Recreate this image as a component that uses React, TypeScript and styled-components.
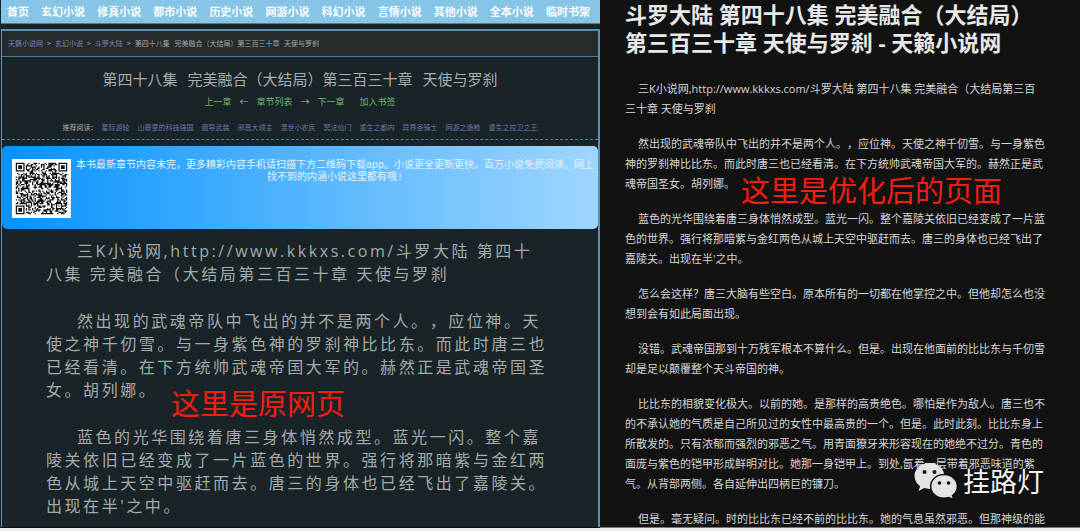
import React from "react";
import styled, { createGlobalStyle } from "styled-components";

const GlobalStyle = createGlobalStyle`
  *, *::before, *::after { box-sizing: border-box; }
  body {
    margin: 0;
    background: #f1eded;
    font-family: "Open Sans", "Noto Sans CJK SC", sans-serif;
    text-spacing-trim: space-all;
  }
  h1, h2, p { margin: 0; font-weight: 400; }
  a { color: inherit; text-decoration: none; }
`;

const Comparison = styled.main`
  display: grid;
  grid-template-columns: 5fr 4fr;
  height: calc(100vh - 3px);
  overflow: hidden;
`;

/* Original page */

const OriginalPage = styled.section`
  position: relative;
  display: flex;
  flex-direction: column;
  min-width: 0;
  overflow: hidden;
  padding-left: 1px;
  background: #182428;
  border-bottom: 1px solid #0c1012;
`;

const NavBar = styled.nav`
  display: flex;
  flex: none;
  justify-content: space-between;
  margin-bottom: 5px;
  padding: 0 10px 0 6px;
  background: #87c5e6;
  border-bottom: 1px solid #4d7f9b;
  color: #fbfdff;
  font: 700 11px/23px "Noto Sans CJK SC", sans-serif;
  white-space: nowrap;
`;

const Reader = styled.div`
  flex: 1 0 auto;
  border: solid #5b8fae;
  border-width: 2px 2px 0 1px;
`;

const Breadcrumb = styled.nav`
  display: flex;
  gap: 4px;
  padding-left: 6px;
  background: #262c2e;
  border-bottom: 1px solid #4b7c94;
  color: #a5a7a5;
  font: 400 7px/25px "Noto Sans CJK SC", sans-serif;
  white-space: pre;

  a { color: #7c82b8; }
`;

const ChapterTitle = styled.h1`
  padding-top: 10px;
  color: #a9acab;
  font: 400 15px/24px "Noto Sans CJK SC", sans-serif;
  text-align: center;
  white-space: pre;
`;

const ChapterNav = styled.nav`
  display: flex;
  justify-content: center;
  gap: 8px;
  margin-top: 3px;
  color: #a9acab;
  font: 400 9px/16px "Noto Sans CJK SC", sans-serif;

  a { color: #6fae6c; }
  a:last-child { margin-left: 7px; }
`;

const Recommended = styled.div`
  display: flex;
  justify-content: center;
  gap: 8px;
  margin-top: 11px;
  padding-bottom: 6px;
  border-bottom: 1px dashed #4f8299;
  color: #7076ab;
  font: 400 7px/12px "Noto Sans CJK SC", sans-serif;
  white-space: nowrap;
`;

const RecommendedLabel = styled.span`
  margin-right: -4px;
  color: #a9acab;
`;

const AppBanner = styled.aside`
  display: flex;
  align-items: flex-start;
  gap: 5px;
  min-height: 83px;
  margin-top: 6px;
  padding: 12px 4px 10px 10px;
  border-radius: 5px;
  background: linear-gradient(90deg, #0693ff, #9fd6ff);
  color: #e4f3ff;
`;

const BannerText = styled.p`
  flex: 1;
  padding-top: 2px;
  font: 400 10px/12px "Liberation Mono", "Noto Sans CJK SC", monospace;
  text-align: center;
  white-space: nowrap;
`;

const OriginalArticle = styled.article`
  display: flex;
  flex-direction: column;
  gap: 24px;
  padding: 11px 47px 0 44px;
  color: #a6a9a8;
  font-size: 16px;
  line-height: 23px;
  letter-spacing: 0.16em;
  white-space: pre-line;

  p { text-indent: 31px; }
`;

/* Optimised page */

const CleanPage = styled.section`
  position: relative;
  min-width: 0;
  overflow: hidden;
  padding: 0 33px 0 25px;
  background: #121212;
  border-bottom: 1px solid #777;
  color: #d6d6d6;
`;

const CleanTitle = styled.h2`
  color: #e8e8e8;
  font-size: 22px;
  font-weight: 700;
  line-height: 28px;
`;

const CleanArticle = styled.article`
  display: flex;
  flex-direction: column;
  gap: 15px;
  margin-top: 23px;
  font-size: 11px;
  line-height: 20px;
  white-space: pre-line;

  p { text-indent: 13px; }
`;

/* Annotations laid over the pages */

const Note = styled.strong<{ $left: number; $top: number }>`
  position: absolute;
  left: ${(p) => p.$left}px;
  top: ${(p) => p.$top}px;
  color: #f71d10;
  font: 400 29px/36px "Noto Sans CJK SC", sans-serif;
  white-space: nowrap;
`;

const Watermark = styled.div`
  position: absolute;
  right: 36px;
  bottom: 27px;
  display: flex;
  align-items: center;
  gap: 5px;
  color: #f4f4f4;
  font: 400 27px/38px "Noto Sans CJK SC", sans-serif;
  text-shadow: 0 0 2px #000;
`;

const categories = [
  "首页", "玄幻小说", "修真小说", "都市小说", "历史小说", "网游小说",
  "科幻小说", "言情小说", "其他小说", "全本小说", "临时书架",
];

const recommendations = [
  "星际游轮", "山寨里的科技强国", "魔导武装", "邪恶大领主", "混世小农民",
  "冥法仙门", "重生之都内", "异界圣骑士", "网游之诡枪", "重生之控卫之王",
];

const chapter = "第四十八集   完美融合（大结局）第三百三十章   天使与罗刹";

const sharedText = [
  "然出现的武魂帝队中飞出的并不是两个人。，应位神。天使之神千仞雪。与一身紫色神的罗刹神比比东。而此时唐三也已经看清。在下方统帅武魂帝国大军的。赫然正是武魂帝国圣女。胡列娜。",
  "蓝色的光华围绕着唐三身体悄然成型。蓝光一闪。整个嘉陵关依旧已经变成了一片蓝色的世界。强行将那暗紫与金红两色从城上天空中驱赶而去。唐三的身体也已经飞出了嘉陵关。出现在半'之中。",
];

const originalText = [
  "三K小说网,http://www.kkkxs.com/斗罗大陆 第四十\n八集 完美融合（大结局第三百三十章 天使与罗刹",
  ...sharedText,
];

const cleanText = [
  "三K小说网,http://www.kkkxs.com/斗罗大陆 第四十八集 完美融合（大结局第三百\n三十章 天使与罗刹",
  ...sharedText,
  "怎么会这样？唐三大脑有些空白。原本所有的一切都在他掌控之中。但他却怎么也没想到会有如此局面出现。",
  "没错。武魂帝国那到十万残军根本不算什么。但是。出现在他面前的比比东与千仞雪却是足以颠覆整个天斗帝国的神。",
  "比比东的相貌变化极大。以前的她。是那样的高贵绝色。哪怕是作为敌人。唐三也不的不承认她的气质是自己所见过的女性中最高贵的一个。但是。此时此刻。比比东身上所散发的。只有浓郁而强烈的邪恶之气。用青面獠牙来形容现在的她绝不过分。青色的面庞与紫色的铠甲形成鲜明对比。她那一身铠甲上。到处,氤着一层带着邪恶味道的紫\n气。从背部两侧。各自延伸出四柄巨的镰刀。",
  "但是。毫无疑问。时的比比东已经不前的比比东。她的气息虽然邪恶。但那神级的能",
];

const QR_SIZE = 41;

function qrPath(): string {
  let seed = 20177;
  const next = () => {
    seed = (seed * 1103515245 + 12345) % 2147483648;
    return seed / 2147483648;
  };
  const finder = (x: number, y: number, cx: number, cy: number) => {
    const d = Math.max(Math.abs(x - cx), Math.abs(y - cy));
    if (d > 4) return null;
    return d === 3 || d <= 1;
  };
  let path = "";
  for (let y = 0; y < QR_SIZE; y++) {
    for (let x = 0; x < QR_SIZE; x++) {
      let on = next() > 0.48;
      const end = QR_SIZE - 4;
      for (const [cx, cy] of [[3, 3], [end, 3], [3, end]]) {
        const f = finder(x, y, cx, cy);
        if (f !== null) on = f;
      }
      const aligned = Math.max(Math.abs(x - 34), Math.abs(y - 34));
      if (aligned <= 2) on = aligned !== 1;
      if (on) path += `M${x} ${y}h1v1h-1z`;
    }
  }
  return path;
}

const QrCode = () => (
  <svg width="61" height="61" viewBox="-3 -3 47 47" role="img" aria-label="二维码">
    <rect x="-3" y="-3" width="47" height="47" fill="#fff" />
    <path d={qrPath()} fill="#111" />
  </svg>
);

const WeChatIcon = () => (
  <svg width="44" height="38" viewBox="0 0 44 38" aria-hidden="true">
    <path
      fill="#e4e4e4"
      d="M15.500 1C7 1 .5 6.700 .5 14c0 4.200 2.200 7.800 5.600 10.200L4.600 29l5.700-2.900c1.700.5 3.400.8 5.200.8 8.400 0 14.900-5.700 14.900-12.900S23.900 1 15.500 1z"
    />
    <path
      fill="#e4e4e4"
      stroke="#121212"
      strokeWidth="1.500"
      d="M30 12.500c-7.400 0-13.300 5.200-13.300 11.900S22.600 36.300 30 36.300c1.700 0 3.300-.3 4.800-.8l5 2-1.300-4c3-2.200 4.900-5.400 4.900-9.100 0-6.700-6-11.900-13.400-11.900z"
    />
    <g fill="#121212">
      <circle cx="10.500" cy="10" r="2" />
      <circle cx="20.500" cy="10" r="2" />
      <circle cx="25.500" cy="21" r="1.800" />
      <circle cx="34.500" cy="21" r="1.800" />
    </g>
  </svg>
);

export default function App() {
  return (
    <>
      <GlobalStyle />
      <Comparison>
        <OriginalPage>
          <NavBar>
            {categories.map((c) => (
              <a href="#" key={c}>{c}</a>
            ))}
          </NavBar>
          <Reader>
            <Breadcrumb>
              <a href="#">天籁小说网</a>
              <span>&gt;</span>
              <a href="#">玄幻小说</a>
              <span>&gt;</span>
              <a href="#">斗罗大陆</a>
              <span>&gt;</span>
              <span>{chapter}</span>
            </Breadcrumb>
            <ChapterTitle>{chapter}</ChapterTitle>
            <ChapterNav>
              <a href="#">上一章</a>
              <span>←</span>
              <a href="#">章节列表</a>
              <span>→</span>
              <a href="#">下一章</a>
              <a href="#">加入书签</a>
            </ChapterNav>
            <Recommended>
              <RecommendedLabel>推荐阅读：</RecommendedLabel>
              {recommendations.map((r) => (
                <a href="#" key={r}>{r}</a>
              ))}
            </Recommended>
            <AppBanner>
              <QrCode />
              <BannerText>
                本书最新章节内容未完，更多精彩内容手机请扫描下方二维码下载app。小说更全更新更快。百万小说免费阅读。网上
                <br />
                找不到的内涵小说这里都有哦!
              </BannerText>
            </AppBanner>
            <OriginalArticle>
              {originalText.map((t) => (
                <p key={t}>{t}</p>
              ))}
            </OriginalArticle>
          </Reader>
          <Note $left={171} $top={384}>这里是原网页</Note>
        </OriginalPage>
        <CleanPage>
          <CleanTitle>
            斗罗大陆 第四十八集 完美融合（大结局）第三百三十章 天使与罗刹 - 天籁小说网
          </CleanTitle>
          <CleanArticle>
            {cleanText.map((t) => (
              <p key={t}>{t}</p>
            ))}
          </CleanArticle>
          <Note $left={141} $top={171}>这里是优化后的页面</Note>
          <Watermark>
            <WeChatIcon />
            <span>挂路灯</span>
          </Watermark>
        </CleanPage>
      </Comparison>
    </>
  );
}
